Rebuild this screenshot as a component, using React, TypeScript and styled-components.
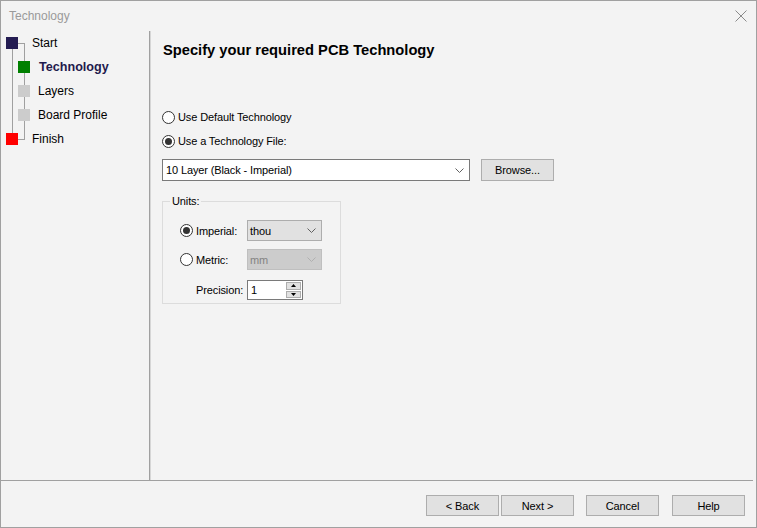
import React from 'react';
import styled, { createGlobalStyle } from 'styled-components';

const GlobalStyle = createGlobalStyle`
  html, body {
    margin: 0;
    padding: 0;
    background: #f3f3f3;
  }
  body {
    font-family: "Liberation Sans", Arial, sans-serif;
    color: #000;
  }
  * {
    box-sizing: border-box;
  }
`;

const Window = styled.div`
  width: 757px;
  height: 528px;
  border: 1px solid #a0a0a0;
  background: #f3f3f3;
  display: flex;
  flex-direction: column;
`;

const TitleBar = styled.div`
  height: 30px;
  flex: none;
  display: flex;
  align-items: center;
  justify-content: space-between;
  padding: 0 9px 0 8px;
`;

const Title = styled.span`
  font-size: 12px;
  color: #9a9a9a;
`;

const CloseButton = styled.button`
  border: 0;
  background: none;
  padding: 0;
  width: 12px;
  height: 12px;
  display: flex;
`;

const Body = styled.div`
  flex: 1;
  display: flex;
  min-height: 0;
`;

const Sidebar = styled.div`
  width: 149px;
  flex: none;
  border-right: 1px solid #a0a0a0;
  box-shadow: 1px 0 0 #d6d6d6;
`;

const Tree = styled.ul`
  position: relative;
  list-style: none;
  margin: 0;
  padding: 0 0 0 5px;
`;

const TreeLines = styled.svg`
  position: absolute;
  left: 0;
  top: 0;
`;

const TreeRow = styled.li<{ $indent: number }>`
  position: relative;
  height: 24px;
  display: flex;
  align-items: center;
  padding-left: ${(p) => p.$indent}px;
`;

const Square = styled.span<{ $color: string }>`
  width: 12px;
  height: 12px;
  flex: none;
  background: ${(p) => p.$color};
`;

const TreeLabel = styled.span<{ $gap: number; $active?: boolean }>`
  margin-left: ${(p) => p.$gap}px;
  font-size: ${(p) => (p.$active ? '12.6px' : '12px')};
  font-weight: ${(p) => (p.$active ? 700 : 400)};
  color: ${(p) => (p.$active ? '#1f1a4d' : '#000')};
`;

const Content = styled.div`
  flex: 1;
  display: flex;
  flex-direction: column;
  align-items: flex-start;
  padding: 10px 12px 0 12px;
  font-size: 11px;
  letter-spacing: -0.12px;
`;

const Heading = styled.h1`
  margin: 0 0 46px 1px;
  font-size: 14.7px;
  line-height: 18px;
  font-weight: 700;
  letter-spacing: 0;
`;

const RadioRow = styled.label`
  height: 24px;
  display: flex;
  align-items: center;
  gap: 3px;
`;

const RadioCircle = styled.span<{ $checked?: boolean }>`
  width: 13px;
  height: 13px;
  flex: none;
  border-radius: 50%;
  border: 1px solid #333;
  background: #fff;
  display: flex;
  align-items: center;
  justify-content: center;

  &::after {
    content: '';
    width: 7px;
    height: 7px;
    border-radius: 50%;
    background: #333;
    display: ${(p) => (p.$checked ? 'block' : 'none')};
  }
`;

const FileRow = styled.div`
  margin-top: 6px;
  display: flex;
  gap: 11px;
`;

const Select = styled.div`
  width: 308px;
  height: 22px;
  border: 1px solid #7a7a7a;
  background: #fff;
  display: flex;
  align-items: center;
  justify-content: space-between;
  padding: 0 5px 0 3px;
`;

const PushButton = styled.button<{ $gap?: number }>`
  width: 73px;
  height: ${(p) => (p.$gap === undefined ? 22 : 21)}px;
  margin-left: ${(p) => p.$gap ?? 0}px;
  border: 1px solid #adadad;
  background: #e1e1e1;
  font-family: "Liberation Sans", Arial, sans-serif;
  font-size: 11px;
  letter-spacing: -0.1px;
  color: #000;
  padding: 0;
`;

const GroupBox = styled.fieldset`
  width: 179px;
  margin: 14px 0 0 0;
  padding: 12px 18px 3px 17px;
  border: 1px solid #dcdcdc;
`;

const Legend = styled.legend`
  margin-left: -10px;
  padding: 0 2px;
  line-height: 13px;
  font-size: 11px;
`;

const UnitsGrid = styled.div`
  display: grid;
  grid-template-columns: 16px 51px 75px;
  grid-template-rows: 21px 21px 22px;
  row-gap: 8px;
  align-items: center;
`;

const GridLabel = styled.span<{ $col?: string }>`
  grid-column: ${(p) => p.$col ?? 'auto'};
  align-self: ${(p) => (p.$col ? 'end' : 'center')};
  line-height: ${(p) => (p.$col ? '20px' : 'normal')};
`;

const Combo = styled.div<{ $disabled?: boolean }>`
  height: 21px;
  border: 1px solid ${(p) => (p.$disabled ? '#bfbfbf' : '#adadad')};
  background: ${(p) => (p.$disabled ? '#cccccc' : '#e1e1e1')};
  color: ${(p) => (p.$disabled ? '#838383' : '#000')};
  display: flex;
  align-items: center;
  justify-content: space-between;
  padding: 0 5px 0 2px;
`;

const SpinField = styled.div`
  width: 56px;
  height: 20px;
  align-self: end;
  border: 1px solid #7a7a7a;
  background: #fff;
  display: flex;
  align-items: center;
  padding-left: 3px;
`;

const SpinButtons = styled.div`
  margin-left: auto;
  width: 16px;
  height: 100%;
  display: flex;
  flex-direction: column;
  gap: 1px;
  padding: 1px 1px 1px 0;
`;

const SpinArrow = styled.span`
  flex: 1;
  background: #e1e1e1;
  border: 1px solid #adadad;
  display: flex;
  align-items: center;
  justify-content: center;
`;

const Footer = styled.div`
  height: 47px;
  flex: none;
  margin-right: 3px;
  border-top: 1px solid #a0a0a0;
  display: flex;
  justify-content: flex-end;
  align-items: flex-start;
  padding: 14px 8px 0 0;
`;

const Chevron = ({ color }: { color: string }) => (
  <svg width="9" height="5" viewBox="0 0 9 5">
    <polyline points="0.5,0.5 4.5,4.5 8.5,0.5" fill="none" stroke={color} strokeWidth="1" />
  </svg>
);

const Triangle = ({ up }: { up?: boolean }) => (
  <svg width="5" height="3" viewBox="0 0 5 3">
    <polygon points={up ? '2.5,0 5,3 0,3' : '0,0 5,0 2.5,3'} fill="#000" />
  </svg>
);

const steps = [
  { label: 'Start', color: '#241c52', indent: 0, gap: 14 },
  { label: 'Technology', color: '#008000', indent: 12, gap: 9, active: true },
  { label: 'Layers', color: '#cccccc', indent: 12, gap: 8 },
  { label: 'Board Profile', color: '#cccccc', indent: 12, gap: 8 },
  { label: 'Finish', color: '#ff0000', indent: 0, gap: 14 },
];

export default function App() {
  return (
    <>
      <GlobalStyle />
      <Window>
        <TitleBar>
          <Title>Technology</Title>
          <CloseButton aria-label="Close">
            <svg width="12" height="12" viewBox="0 0 12 12">
              <path d="M0.5 0.5 L11.5 11.5 M11.5 0.5 L0.5 11.5" stroke="#8a8a8a" strokeWidth="1" />
            </svg>
          </CloseButton>
        </TitleBar>
        <Body>
          <Sidebar>
            <Tree>
              <TreeLines width="30" height="120" viewBox="0 0 30 120">
                <path
                  d="M11.5 18 V102 M17 12.5 H23.5 M23.5 12 V109 M17 108.5 H24"
                  stroke="#a0a0a0"
                  strokeWidth="1"
                  fill="none"
                />
              </TreeLines>
              {steps.map((s) => (
                <TreeRow key={s.label} $indent={s.indent}>
                  <Square $color={s.color} />
                  <TreeLabel $gap={s.gap} $active={s.active}>
                    {s.label}
                  </TreeLabel>
                </TreeRow>
              ))}
            </Tree>
          </Sidebar>
          <Content>
            <Heading>Specify your required PCB Technology</Heading>
            <RadioRow>
              <RadioCircle />
              Use Default Technology
            </RadioRow>
            <RadioRow>
              <RadioCircle $checked />
              Use a Technology File:
            </RadioRow>
            <FileRow>
              <Select>
                <span>10 Layer (Black - Imperial)</span>
                <Chevron color="#606060" />
              </Select>
              <PushButton>Browse...</PushButton>
            </FileRow>
            <GroupBox>
              <Legend>Units:</Legend>
              <UnitsGrid>
                <RadioCircle $checked />
                <GridLabel>Imperial:</GridLabel>
                <Combo>
                  <span>thou</span>
                  <Chevron color="#606060" />
                </Combo>
                <RadioCircle />
                <GridLabel>Metric:</GridLabel>
                <Combo $disabled>
                  <span>mm</span>
                  <Chevron color="#b0b0b0" />
                </Combo>
                <GridLabel $col="2">Precision:</GridLabel>
                <SpinField>
                  <span>1</span>
                  <SpinButtons>
                    <SpinArrow>
                      <Triangle up />
                    </SpinArrow>
                    <SpinArrow>
                      <Triangle />
                    </SpinArrow>
                  </SpinButtons>
                </SpinField>
              </UnitsGrid>
            </GroupBox>
          </Content>
        </Body>
        <Footer>
          <PushButton $gap={0}>&lt; Back</PushButton>
          <PushButton $gap={2}>Next &gt;</PushButton>
          <PushButton $gap={12}>Cancel</PushButton>
          <PushButton $gap={13}>Help</PushButton>
        </Footer>
      </Window>
    </>
  );
}
